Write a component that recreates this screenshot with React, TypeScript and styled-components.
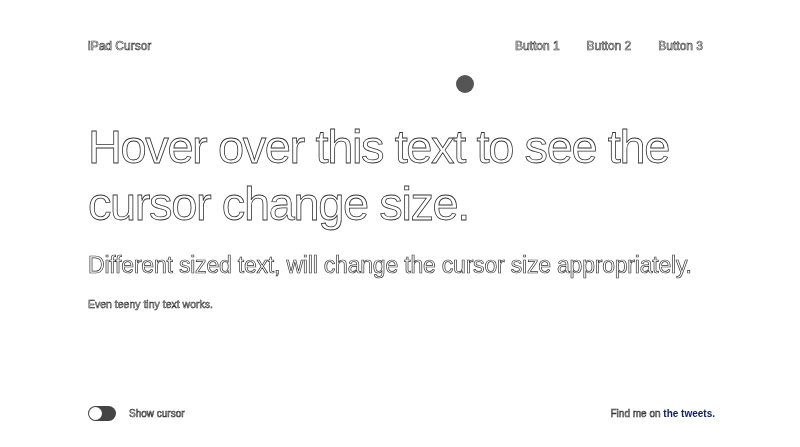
import React, { useState } from "react";
import styled, { createGlobalStyle } from "styled-components";

const GlobalStyle = createGlobalStyle`
  html, body {
    margin: 0;
    padding: 0;
    background: #fff;
  }
  body {
    font-family: "Liberation Sans", Arial, sans-serif;
  }
`;

const Page = styled.div`
  position: relative;
  height: 447px;
  padding: 0 88px;
  box-sizing: border-box;
  display: flex;
  flex-direction: column;
  overflow: hidden;
  will-change: transform;
`;

const Outline = styled.span`
  color: #fff;
  -webkit-text-stroke: 0.6px #333;
`;

const Header = styled.header`
  display: flex;
  justify-content: space-between;
  align-items: center;
  height: 92px;
`;

const Brand = styled(Outline)`
  font-size: 12px;
`;

const Nav = styled.nav`
  display: flex;
  gap: 27px;
  margin-right: 9px;
`;

const NavButton = styled(Outline)`
  font-size: 12px;
  cursor: pointer;
`;

const CursorDot = styled.div`
  position: absolute;
  left: 456px;
  top: 75px;
  width: 18px;
  height: 18px;
  border-radius: 50%;
  background: #555;
`;

const Main = styled.main`
  flex: 1;
  padding-top: 26px;
`;

const Heading = styled.h1`
  margin: 0;
  font-size: 47px;
  line-height: 57px;
  font-weight: 400;
  max-width: 620px;
  letter-spacing: -1.4px;
  color: #fff;
  -webkit-text-stroke: 0.8px #333;
`;

const SubHeading = styled.h2`
  margin: 18px 0 0;
  font-size: 23px;
  line-height: 30px;
  font-weight: 400;
  letter-spacing: -0.2px;
  color: #fff;
  -webkit-text-stroke: 0.7px #333;
  white-space: nowrap;
`;

const Tiny = styled.p`
  margin: 18px 0 0;
  font-size: 10.5px;
  color: #fff;
  -webkit-text-stroke: 0.5px #222;
`;

const Footer = styled.footer`
  display: flex;
  justify-content: space-between;
  align-items: center;
  height: 54px;
  padding-bottom: 14px;
  box-sizing: border-box;
`;

const ToggleRow = styled.label`
  display: flex;
  align-items: center;
  gap: 13px;
  cursor: pointer;
`;

const Track = styled.span<{ $on: boolean }>`
  position: relative;
  width: 28px;
  height: 15px;
  border-radius: 8px;
  background: #444;
  display: inline-block;
`;

const Knob = styled.span<{ $on: boolean }>`
  position: absolute;
  top: 1px;
  left: ${(p) => (p.$on ? "14px" : "1px")};
  width: 13px;
  height: 13px;
  border-radius: 50%;
  background: #fff;
`;

const SmallText = styled(Outline)`
  font-size: 10px;
`;

const Credit = styled(SmallText)`
  margin-right: -3px;
`;

const TweetLink = styled.a`
  color: #10226a;
  font-weight: 700;
  text-decoration: none;
  -webkit-text-stroke: 0;
`;

export default function App() {
  const [showCursor, setShowCursor] = useState(false);
  return (
    <>
      <GlobalStyle />
      <Page>
        <Header>
          <Brand>iPad Cursor</Brand>
          <Nav>
            <NavButton>Button 1</NavButton>
            <NavButton>Button 2</NavButton>
            <NavButton>Button 3</NavButton>
          </Nav>
        </Header>
        <CursorDot />
        <Main>
          <Heading>Hover over this text to see the cursor change size.</Heading>
          <SubHeading>
            Different sized text, will change the cursor size appropriately.
          </SubHeading>
          <Tiny>Even teeny tiny text works.</Tiny>
        </Main>
        <Footer>
          <ToggleRow onClick={() => setShowCursor((v) => !v)}>
            <Track $on={showCursor}>
              <Knob $on={showCursor} />
            </Track>
            <SmallText>Show cursor</SmallText>
          </ToggleRow>
          <Credit>
            Find me on <TweetLink href="#">the tweets.</TweetLink>
          </Credit>
        </Footer>
      </Page>
    </>
  );
}
